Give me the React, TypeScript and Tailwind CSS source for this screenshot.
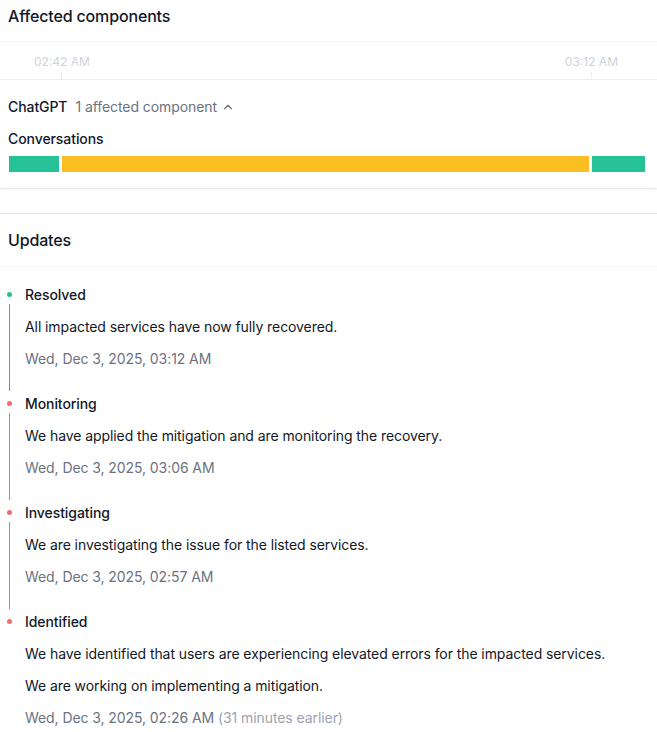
import React from "react";
import { ChevronUp } from "lucide-react";

type Update = {
  status: string;
  color: "green" | "red";
  lines: string[];
  date: string;
  note?: string;
  last?: boolean;
};

const updates: Update[] = [
  {
    status: "Resolved",
    color: "green",
    lines: ["All impacted services have now fully recovered."],
    date: "Wed, Dec 3, 2025, 03:12 AM",
  },
  {
    status: "Monitoring",
    color: "red",
    lines: ["We have applied the mitigation and are monitoring the recovery."],
    date: "Wed, Dec 3, 2025, 03:06 AM",
  },
  {
    status: "Investigating",
    color: "red",
    lines: ["We are investigating the issue for the listed services."],
    date: "Wed, Dec 3, 2025, 02:57 AM",
  },
  {
    status: "Identified",
    color: "red",
    lines: [
      "We have identified that users are experiencing elevated errors for the impacted services.",
      "We are working on implementing a mitigation.",
    ],
    date: "Wed, Dec 3, 2025, 02:26 AM",
    note: "(31 minutes earlier)",
    last: true,
  },
];

function TimelineItem({ item }: { item: Update }) {
  const dot = item.color === "green" ? "bg-[#22c08f]" : "bg-[#f46b6b]";
  const rail = item.color === "green" ? "border-[#22c08f]" : "border-[#f46b6b]";

  return (
    <div className="flex">
      <div className="ml-px flex w-[17px] flex-col items-center">
        <div className={`mt-[7px] h-[5px] w-[5px] shrink-0 rounded-full ${dot}`} />
        {!item.last && <div className={`mt-[7px] mb-[3px] w-0 flex-1 border-l ${rail}`} />}
      </div>
      <div className={`ml-[7px] tracking-[-0.08px] ${item.last ? "" : "pb-[25px]"}`}>
        <div className="text-sm leading-5 font-medium text-[#111827]">{item.status}</div>
        {item.lines.map((l) => (
          <p key={l} className="mt-3 text-sm leading-5 text-[#111827]">
            {l}
          </p>
        ))}
        <div className="mt-3 text-sm leading-5 text-[#6b7280]">
          {item.date}
          {item.note && <span className="text-[#9ca3af]"> {item.note}</span>}
        </div>
      </div>
    </div>
  );
}

export default function App() {
  return (
    <div className="min-h-[732px] w-[657px] bg-white font-['Inter',sans-serif] text-[#111827]">
      <div className="shadow-[0_1px_2px_rgba(0,0,0,0.12)]">
        <div className="h-[42px] border-b border-[#f3f4f6] px-2 pt-1">
          <h2 className="text-base leading-6 font-medium tracking-[-0.15px]">Affected components</h2>
        </div>

        <div className="flex h-[38px] items-start justify-between border-b border-[#eeeeee] pr-[39px] pl-[34px]">
          <div className="flex flex-col items-center">
            <span className="mt-[12px] text-xs leading-4 text-[#cfd3da]">02:42 AM</span>
            <span className="mt-[2px] h-[8px] w-px bg-[#eeeeee]" />
          </div>
          <div className="flex flex-col items-center">
            <span className="mt-[12px] text-xs leading-4 text-[#cfd3da]">03:12 AM</span>
            <span className="mt-[2px] h-[8px] w-px bg-[#eeeeee]" />
          </div>
        </div>

        <div className="pr-3 pb-4 pl-2 tracking-[-0.08px]">
          <div className="flex items-center gap-2 pt-[17px] text-sm leading-5">
            <span className="font-medium">ChatGPT</span>
            <span className="flex items-center gap-1 text-[#6b7280]">
              1 affected component
              <ChevronUp size={14} strokeWidth={2} className="text-[#6b7280]" />
            </span>
          </div>
          <div className="mt-3 text-sm leading-5 font-medium">Conversations</div>
          <div className="mt-[7px] flex h-4 gap-[3px] pl-px">
            <div className="w-[50px] bg-[#25c297]" />
            <div className="flex-1 bg-[#fbbf24]" />
            <div className="w-[53px] bg-[#25c297]" />
          </div>
        </div>
      </div>

      <div className="mt-[25px] border-t border-[#e5e7eb]">
        <div className="flex h-[53px] items-center border-b border-[#f3f4f6] px-2">
          <h2 className="text-base leading-6 font-medium tracking-[-0.15px]">Updates</h2>
        </div>
        <div className="pt-[18px] pr-3">
          {updates.map((u) => (
            <TimelineItem key={u.status} item={u} />
          ))}
        </div>
      </div>
    </div>
  );
}
